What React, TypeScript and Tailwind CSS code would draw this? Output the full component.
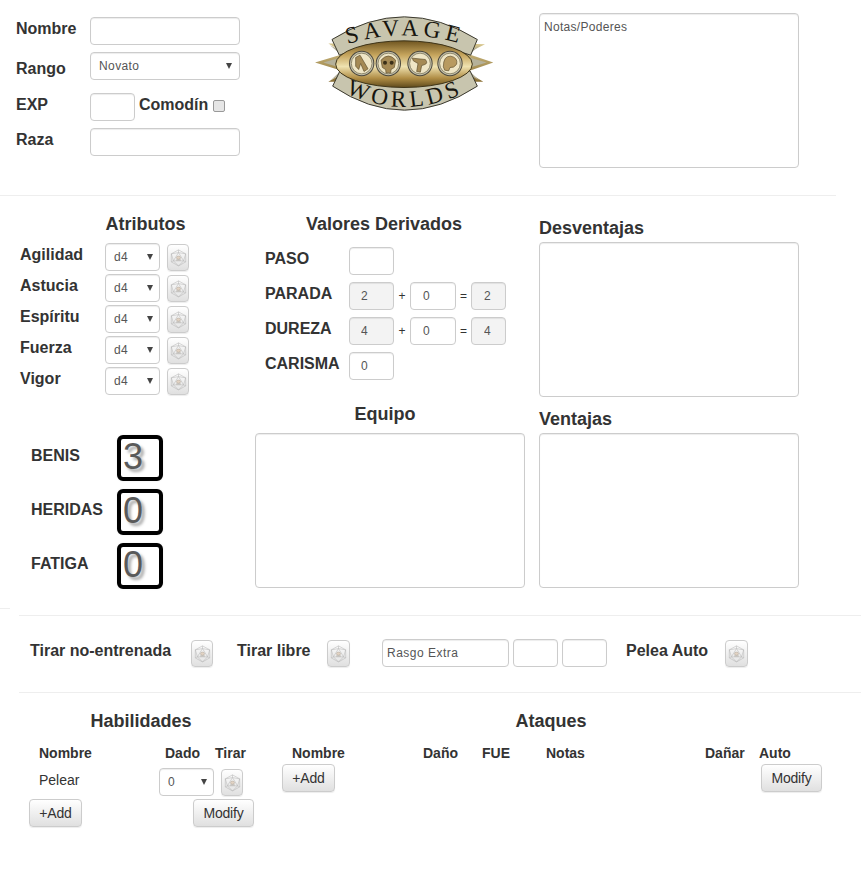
import type { ReactNode } from "react";

const field =
  "block h-[28px] rounded-[4px] border border-[#ccc] text-[12px] text-[#555] shadow-[inset_0_1px_1px_rgba(0,0,0,0.075)] outline-none";
const label = "text-[16px] leading-[20px] font-bold text-[#333]";
const heading = "text-[18px] leading-[20px] font-bold text-[#333]";
const th = "text-[14px] leading-[20px] font-bold text-[#333]";
const button =
  "block h-[28px] rounded-[4px] border border-[#ccc] bg-linear-to-b from-white to-[#e0e0e0] text-[14px] leading-[25px] tracking-[-0.2px] text-[#333] text-center shadow-[0_1px_1px_rgba(0,0,0,0.075)]";

const DiceIcon = () => (
  <svg width="17" height="18" viewBox="0 0 16 17" fill="none" stroke="#b4b4b4" strokeWidth="0.5">
    <polygon points="8,0.8 14.8,4.6 14.8,12.2 8,16 1.2,12.2 1.2,4.6" />
    <polygon points="8,3.4 12.8,11.2 3.2,11.2" />
    <path d="M8 0.8 L8 3.4 M1.2 4.6 L8 3.4 L14.8 4.6 M1.2 12.2 L3.2 11.2 M14.8 12.2 L12.8 11.2 M8 16 L3.2 11.2 M8 16 L12.8 11.2 M1.2 4.6 L3.2 11.2 M14.8 4.6 L12.8 11.2" />
    <ellipse cx="8" cy="8.2" rx="1.9" ry="1.5" fill="#e2d3c4" stroke="#b3a99c" />
    <path d="M5.8 10.4 H10.2" stroke="#a9a39a" strokeWidth="0.7" />
  </svg>
);

const DiceButton = ({ big = false }: { big?: boolean }) => (
  <button
    className={`flex items-center justify-center rounded-[4px] border border-[#ccc] bg-linear-to-b from-white to-[#e0e0e0] shadow-[0_1px_1px_rgba(0,0,0,0.075)] ${
      big ? "h-[27px] w-[23px]" : "h-[27px] w-[22px]"
    }`}
  >
    <DiceIcon />
  </button>
);

const Select = ({ value, width, caret }: { value: string; width: string; caret: string }) => (
  <div className={`relative shrink-0 ${width}`}>
    <select className={`${field} w-full appearance-none bg-white pl-[8px] tracking-[0.4px]`} defaultValue={value}>
      <option>{value}</option>
    </select>
    <span
      className={`absolute top-[11px] h-0 w-0 border-x-[3px] border-t-[6px] border-x-transparent border-t-[#444] ${caret}`}
    />
  </div>
);

const Medallion = ({ cx, children }: { cx: number; children: ReactNode }) => (
  <g>
    <circle cx={cx} cy="190" r="38" fill="#4a473c" />
    <circle cx={cx} cy="190" r="35" fill="#c4c0ab" />
    <circle cx={cx} cy="190" r="31" fill="#efe6c6" stroke="#6d6648" strokeWidth="2" />
    {children}
  </g>
);

const Logo = () => (
  <svg width="180" height="97" viewBox="45 45 540 290" className="block overflow-visible">
    <defs>
      <linearGradient id="gold" x1="0" y1="0" x2="0" y2="1">
        <stop offset="0" stopColor="#6f5520" />
        <stop offset="0.3" stopColor="#c5a45c" />
        <stop offset="0.55" stopColor="#efe2b0" />
        <stop offset="0.8" stopColor="#b08d45" />
        <stop offset="1" stopColor="#5f4a1c" />
      </linearGradient>
      <linearGradient id="spike" x1="0" y1="0" x2="0" y2="1">
        <stop offset="0" stopColor="#d8c78e" />
        <stop offset="1" stopColor="#8a6f33" />
      </linearGradient>
      <path id="logoTop" d="M112 142 Q312 70 518 142" />
      <path id="logoBottom" d="M116 268 Q312 372 514 268" />
    </defs>
    <polygon
      points="45,187 135,160 85,130 150,130 300,150 480,130 555,132 500,160 580,187 500,215 550,245 480,245 300,230 150,245 85,245 135,215"
      fill="url(#spike)"
    />
    <path
      d="M90 135 L130 170 L70 187 L130 205 L92 240 L120 225 L140 190 L120 150 Z M540 135 L500 170 L560 187 L500 205 L538 240 L510 225 L490 190 L510 150 Z"
      fill="#b5b19a"
    />
    <path d="M96 118 Q312 -18 532 118 L512 165 Q312 90 118 165 Z" fill="#c8c5ae" stroke="#3b392f" strokeWidth="3" />
    <path d="M98 258 Q312 402 532 258 L510 212 Q312 300 120 212 Z" fill="#c8c5ae" stroke="#3b392f" strokeWidth="3" />
    <ellipse cx="312" cy="192" rx="205" ry="70" fill="url(#gold)" stroke="#3f3519" strokeWidth="3" />
    <text fontFamily="'Liberation Serif', serif" fontSize="70" fill="#17150f" textAnchor="middle" letterSpacing="14">
      <textPath href="#logoTop" startOffset="50%">
        SAVAGE
      </textPath>
    </text>
    <text fontFamily="'Liberation Serif', serif" fontSize="70" fill="#17150f" textAnchor="middle" letterSpacing="12">
      <textPath href="#logoBottom" startOffset="50%">
        WORLDS
      </textPath>
    </text>
    <Medallion cx={185}>
      <path d="M167 172 L180 165 L204 206 L192 214 L182 190 L176 208 L167 198 Z" fill="#a58a55" stroke="#5e4d2c" strokeWidth="2" />
    </Medallion>
    <Medallion cx={265}>
      <path d="M243 180 Q265 155 287 180 L283 202 L273 208 L272 218 L258 218 L257 208 L247 202 Z" fill="#a58a55" stroke="#5e4d2c" strokeWidth="2" />
      <circle cx="255" cy="188" r="6" fill="#3a2f18" />
      <circle cx="275" cy="188" r="6" fill="#3a2f18" />
    </Medallion>
    <Medallion cx={360}>
      <path d="M337 174 L376 178 Q386 190 372 194 L365 196 L361 216 L350 214 L354 190 L340 182 Z" fill="#a58a55" stroke="#5e4d2c" strokeWidth="2" />
    </Medallion>
    <Medallion cx={450}>
      <path d="M430 200 Q430 167 452 168 Q474 172 470 192 Q462 204 450 202 L446 212 L434 210 Z" fill="#b89a60" stroke="#5e4d2c" strokeWidth="2" />
    </Medallion>
  </svg>
);

const attributes = ["Agilidad", "Astucia", "Espíritu", "Fuerza", "Vigor"];

const Counter = ({ name, value }: { name: string; value: number }) => (
  <div className="flex">
    <div className={`${label} mt-[11px] w-[86px]`}>{name}</div>
    <div className="h-[46px] w-[46px] rounded-[6px] border-[4px] border-black bg-white pl-[2px] text-[36px] leading-[36px] text-[#5a5a5a] shadow-[0_0_2px_rgba(0,0,0,0.1)] [text-shadow:3px_3px_3px_#a8a8a8]">
      {value}
    </div>
  </div>
);

const Derived = ({ name, a, b, c }: { name: string; a: string; b: string; c: string }) => (
  <div className="flex">
    <div className={`${label} mt-[2px] w-[84px]`}>{name}</div>
    <input className={`${field} w-[45px] bg-[#f3f3f3] pl-[11px]`} defaultValue={a} disabled />
    <span className="w-[16px] text-center text-[12px] leading-[28px] text-[#333]">+</span>
    <input className={`${field} w-[46px] bg-white pl-[12px]`} defaultValue={b} />
    <span className="w-[15px] text-center text-[12px] leading-[28px] text-[#333]">=</span>
    <input className={`${field} w-[35px] bg-[#f3f3f3] pl-[12px]`} defaultValue={c} disabled />
  </div>
);

export default function App() {
  return (
    <div className="h-[870px] w-[864px] overflow-hidden bg-white font-['Liberation_Sans',Arial,sans-serif] text-[#333]">
      {/* top: identity, logo, notes */}
      <div className="flex h-[196px] w-[836px] border-b border-[#eee]">
        <div className="w-[315px] shrink-0 pt-[17px] pl-[16px]">
          <div className="flex">
            <div className={`${label} mt-[2px] w-[74px]`}>Nombre</div>
            <input className={`${field} w-[150px] bg-white`} />
          </div>
          <div className="mt-[7px] flex">
            <div className={`${label} mt-[7px] w-[74px]`}>Rango</div>
            <Select value="Novato" width="w-[150px]" caret="right-[8px]" />
          </div>
          <div className="mt-[13px] flex">
            <div className={`${label} mt-[2px] w-[74px]`}>EXP</div>
            <input className={`${field} w-[45px] bg-white`} />
            <div className={`${label} mt-[2px] ml-[4px]`}>Comodín</div>
            <input
              type="checkbox"
              className="mt-[7px] ml-[5px] h-[12px] w-[12px] appearance-none rounded-[2px] border border-[#999] bg-[#e6e6e6]"
            />
          </div>
          <div className="mt-[7px] flex">
            <div className={`${label} mt-[2px] w-[74px]`}>Raza</div>
            <input className={`${field} w-[150px] bg-white`} />
          </div>
        </div>
        <div className="w-[224px] shrink-0 pt-[15px]">
          <Logo />
        </div>
        <div className="pt-[13px]">
          <textarea
            className={`${field} h-[155px] w-[260px] resize-none bg-white px-[4px] py-[4px] tracking-[0.3px]`}
            defaultValue="Notas/Poderes"
          />
        </div>
      </div>

      {/* attributes, derived values, lists */}
      <div className="flex h-[412px]">
        <div className="w-[255px] shrink-0 pt-[18px]">
          <div className={`${heading} w-[291px] text-center`}>Atributos</div>
          <div className="mt-[9px] flex flex-col gap-[3px] pl-[20px]">
            {attributes.map((name) => (
              <div key={name} className="flex">
                <div className={`${label} mt-[2px] w-[85px]`}>{name}</div>
                <Select value="d4" width="w-[55px]" caret="right-[7px]" />
                <div className="mt-[1px] ml-[7px]">
                  <DiceButton />
                </div>
              </div>
            ))}
          </div>
          <div className="mt-[40px] flex flex-col gap-[8px] pl-[31px]">
            <Counter name="BENIS" value={3} />
            <Counter name="HERIDAS" value={0} />
            <Counter name="FATIGA" value={0} />
          </div>
        </div>

        <div className="w-[284px] shrink-0 pt-[18px]">
          <div className={`${heading} w-[258px] text-center`}>Valores Derivados</div>
          <div className="mt-[13px] flex flex-col gap-[7px] pl-[10px]">
            <div className="flex">
              <div className={`${label} mt-[2px] w-[84px]`}>PASO</div>
              <input className={`${field} w-[45px] bg-white`} />
            </div>
            <Derived name="PARADA" a="2" b="0" c="2" />
            <Derived name="DUREZA" a="4" b="0" c="4" />
            <div className="flex">
              <div className={`${label} mt-[2px] w-[84px]`}>CARISMA</div>
              <input className={`${field} w-[45px] bg-white pl-[11px]`} defaultValue="0" />
            </div>
          </div>
          <div className={`${heading} mt-[24px] w-[260px] text-center`}>Equipo</div>
          <textarea className={`${field} mt-[9px] h-[155px] w-[270px] resize-none bg-white`} />
        </div>

        <div className="pt-[22px]">
          <div className={heading}>Desventajas</div>
          <textarea className={`${field} mt-[4px] h-[155px] w-[260px] resize-none bg-white`} />
          <div className={`${heading} mt-[12px]`}>Ventajas</div>
          <textarea className={`${field} mt-[4px] h-[155px] w-[260px] resize-none bg-white`} />
        </div>
      </div>

      <div className="h-px w-[10px] bg-[#eee]" />

      {/* rolls */}
      <div className="mt-[6px] ml-[19px] flex h-[78px] w-[842px] items-start border-y border-[#eee] pt-[23px] pl-[11px]">
        <div className={`${label} mt-[2px] w-[161px]`}>Tirar no-entrenada</div>
        <div className="mt-[1px]">
          <DiceButton />
        </div>
        <div className={`${label} mt-[2px] ml-[24px] w-[90px]`}>Tirar libre</div>
        <div className="mt-[1px]">
          <DiceButton big />
        </div>
        <input className={`${field} ml-[32px] w-[127px] bg-white pl-[4px] tracking-[0.5px]`} defaultValue="Rasgo Extra" />
        <input className={`${field} ml-[4px] w-[45px] bg-white`} />
        <input className={`${field} ml-[4px] w-[45px] bg-white`} />
        <div className={`${label} mt-[2px] ml-[19px] w-[99px]`}>Pelea Auto</div>
        <div className="mt-[1px]">
          <DiceButton big />
        </div>
      </div>

      {/* skills and attacks */}
      <div className="flex pt-[18px]">
        <div className="w-[282px] shrink-0">
          <div className={`${heading} text-center`}>Habilidades</div>
          <div className={`${th} mt-[12px] flex pl-[39px]`}>
            <div className="w-[126px]">Nombre</div>
            <div className="w-[50px]">Dado</div>
            <div>Tirar</div>
          </div>
          <div className="mt-[5px] flex pl-[39px]">
            <div className="mt-[2px] w-[120px] text-[14px] leading-[20px] text-[#333]">Pelear</div>
            <Select value="0" width="w-[55px]" caret="right-[7px]" />
            <div className="mt-[1px] ml-[7px]">
              <DiceButton />
            </div>
          </div>
          <div className="mt-[3px] flex pl-[29px]">
            <button className={`${button} w-[53px]`}>+Add</button>
            <button className={`${button} ml-[111px] w-[61px]`}>Modify</button>
          </div>
        </div>
        <div>
          <div className={`${heading} w-[538px] text-center`}>Ataques</div>
          <div className={`${th} mt-[12px] flex pl-[10px]`}>
            <div className="w-[131px]">Nombre</div>
            <div className="w-[59px]">Daño</div>
            <div className="w-[64px]">FUE</div>
            <div className="w-[159px]">Notas</div>
            <div className="w-[54px]">Dañar</div>
            <div>Auto</div>
          </div>
          <div className="mt-[1px] flex">
            <button className={`${button} w-[53px]`}>+Add</button>
            <button className={`${button} ml-[426px] w-[61px]`}>Modify</button>
          </div>
        </div>
      </div>
    </div>
  );
}
